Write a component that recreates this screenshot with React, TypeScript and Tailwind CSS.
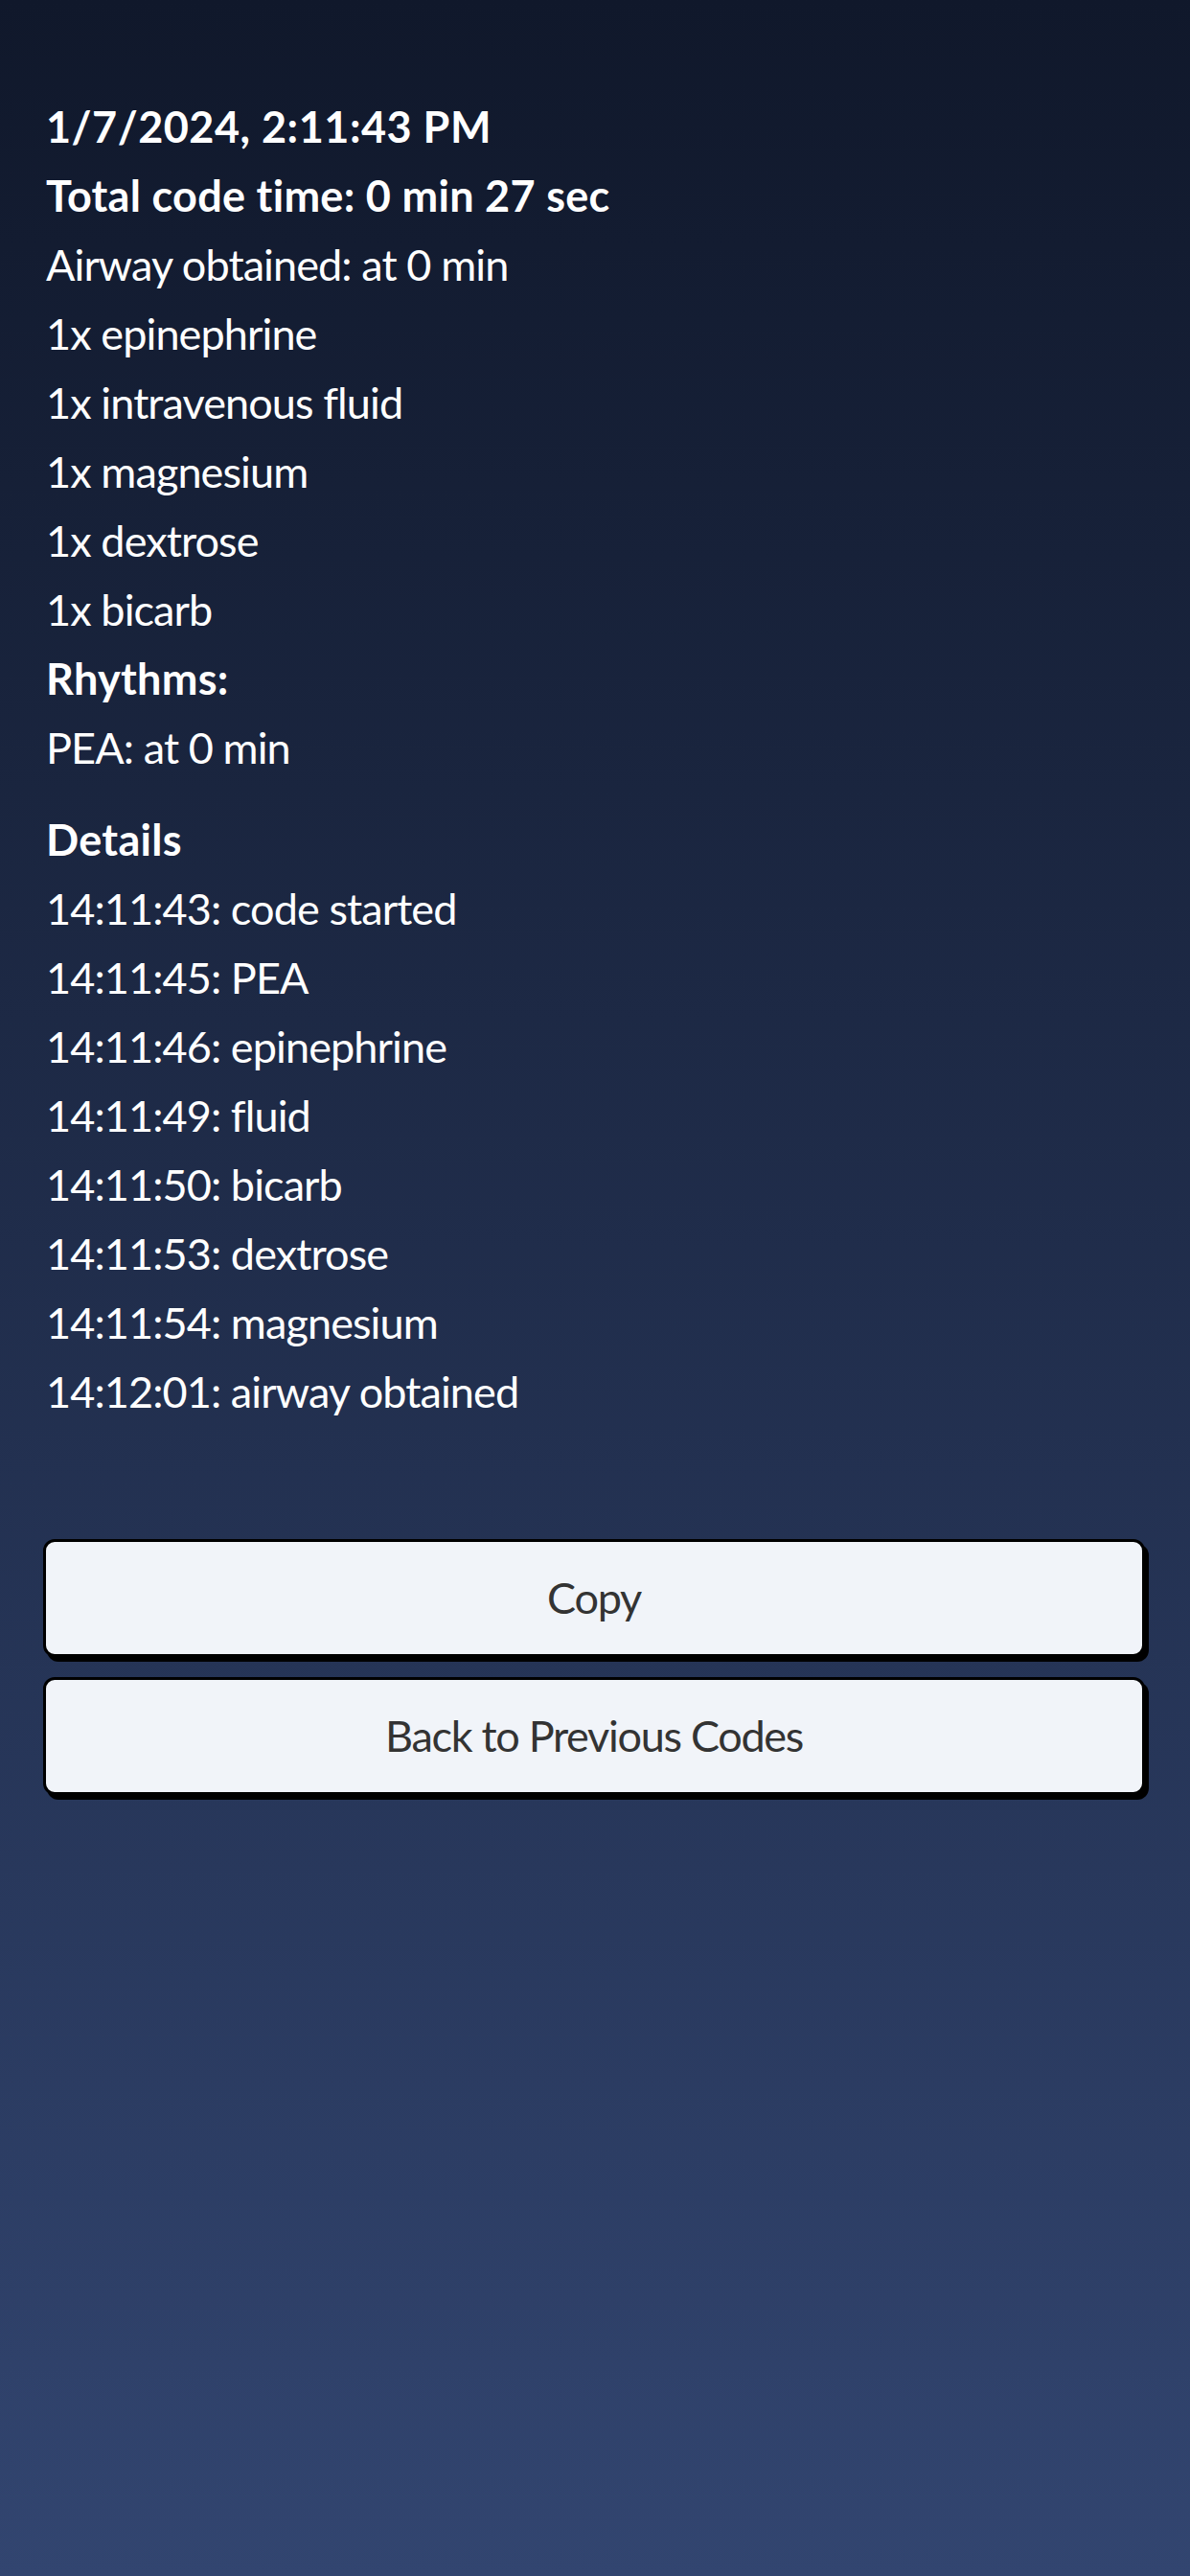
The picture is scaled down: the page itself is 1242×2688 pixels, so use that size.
const SUMMARY = [
  "Airway obtained: at 0 min",
  "1x epinephrine",
  "1x intravenous fluid",
  "1x magnesium",
  "1x dextrose",
  "1x bicarb",
];

const DETAILS = [
  "14:11:43: code started",
  "14:11:45: PEA",
  "14:11:46: epinephrine",
  "14:11:49: fluid",
  "14:11:50: bicarb",
  "14:11:53: dextrose",
  "14:11:54: magnesium",
  "14:12:01: airway obtained",
];

export default function App() {
  return (
    <div
      className="min-h-[2688px] w-full bg-gradient-to-b from-[#10182b] to-[#324570] text-white"
      style={{ fontFamily: "Lato, 'Noto Sans', sans-serif" }}
    >
      <main className="px-[45px] pt-[96px]">
        <section className="pl-[3px] text-[45px] leading-[72px] tracking-[-0.9px]">
          <p className="font-bold tracking-[0.5px]">1/7/2024, 2:11:43 PM</p>
          <p className="font-bold tracking-[0.3px]">Total code time: 0 min 27 sec</p>
          {SUMMARY.map((line) => (
            <p key={line}>{line}</p>
          ))}
          <p className="font-bold tracking-[0.3px]">Rhythms:</p>
          <p>PEA: at 0 min</p>

          <p className="mt-[24px] font-bold tracking-[0.3px]">Details</p>
          {DETAILS.map((line) => (
            <p key={line}>{line}</p>
          ))}
        </section>

        <div className="mt-[118px] flex flex-col gap-[21px] pr-[2px]">
          <button className="h-[123px] w-full rounded-[12px] border-[3px] border-black bg-[#f1f4f9] text-[45px] tracking-[-1.3px] text-[#333] shadow-[4px_5px_0_0_#000]">
            Copy
          </button>
          <button className="h-[123px] w-full rounded-[12px] border-[3px] border-black bg-[#f1f4f9] text-[45px] tracking-[-1.3px] text-[#333] shadow-[4px_5px_0_0_#000]">
            Back to Previous Codes
          </button>
        </div>
      </main>
    </div>
  );
}
